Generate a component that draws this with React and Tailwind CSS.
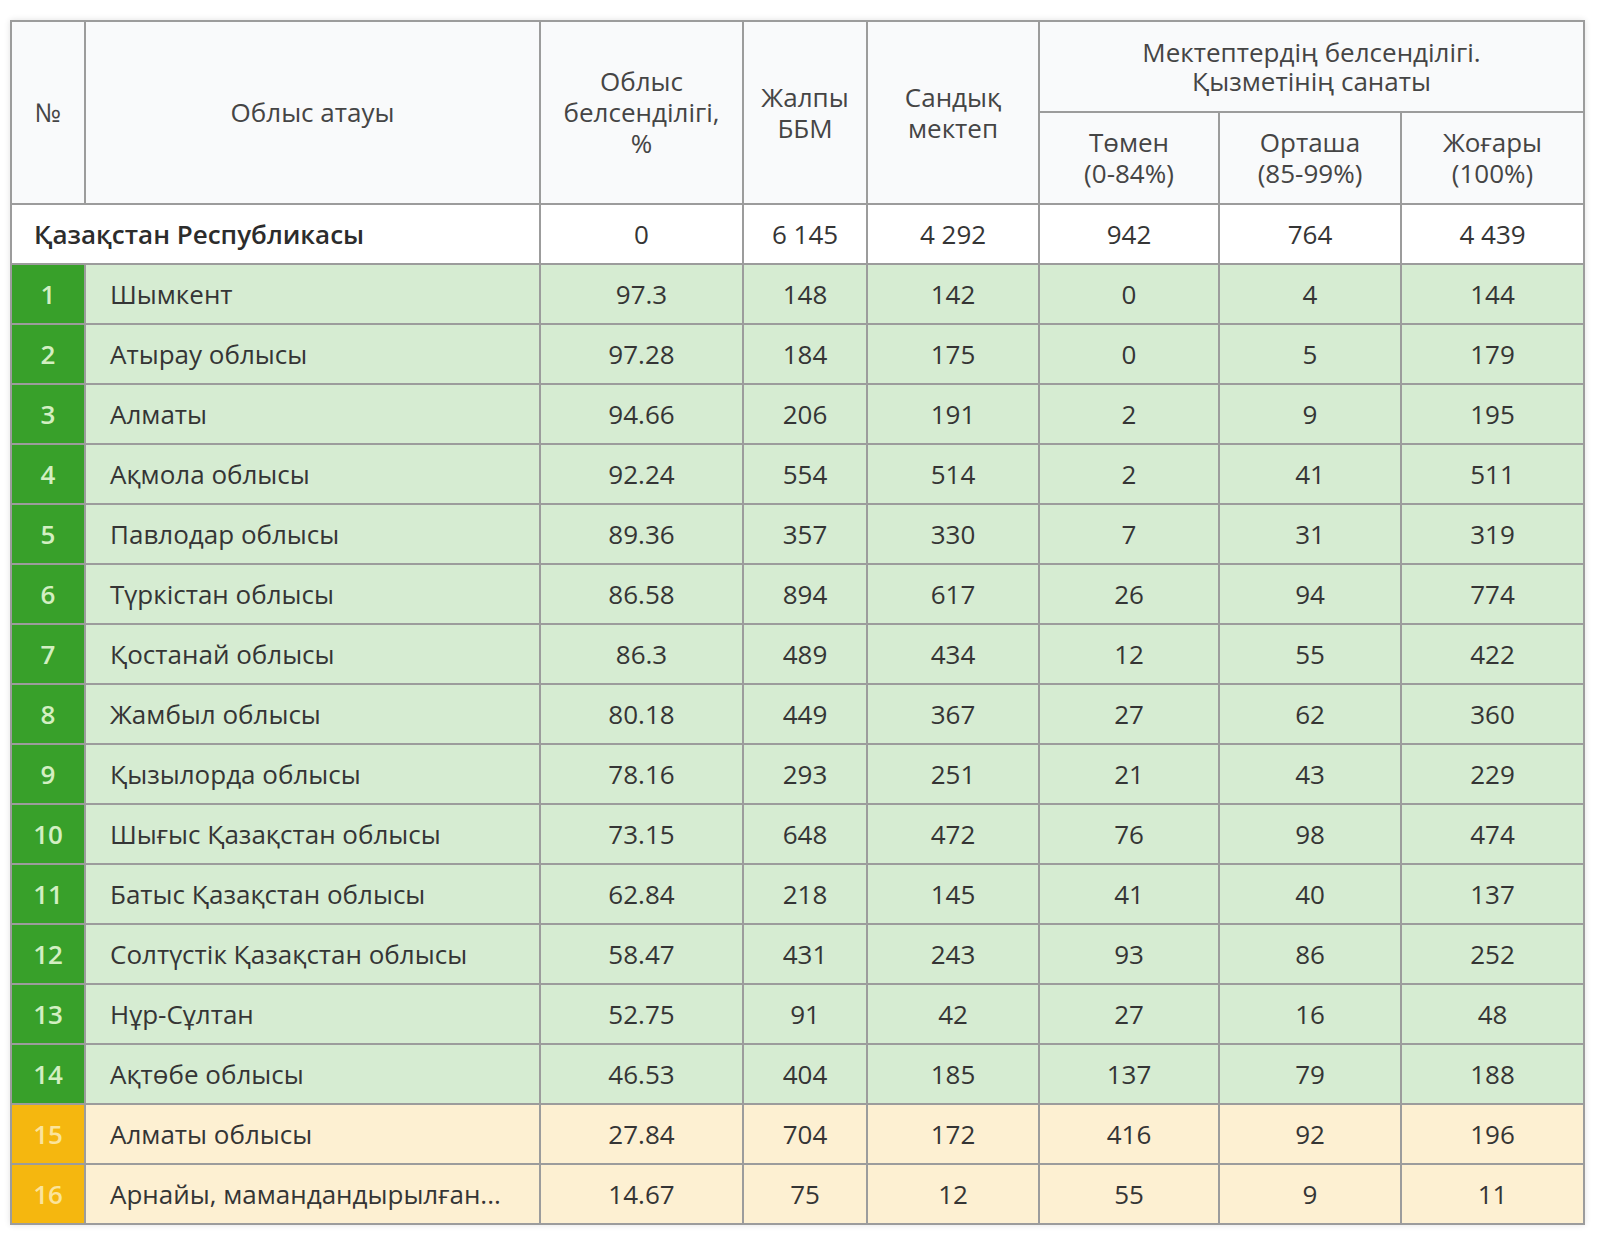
const rows = [
  ["Шымкент", "97.3", "148", "142", "0", "4", "144"],
  ["Атырау облысы", "97.28", "184", "175", "0", "5", "179"],
  ["Алматы", "94.66", "206", "191", "2", "9", "195"],
  ["Ақмола облысы", "92.24", "554", "514", "2", "41", "511"],
  ["Павлодар облысы", "89.36", "357", "330", "7", "31", "319"],
  ["Түркістан облысы", "86.58", "894", "617", "26", "94", "774"],
  ["Қостанай облысы", "86.3", "489", "434", "12", "55", "422"],
  ["Жамбыл облысы", "80.18", "449", "367", "27", "62", "360"],
  ["Қызылорда облысы", "78.16", "293", "251", "21", "43", "229"],
  ["Шығыс Қазақстан облысы", "73.15", "648", "472", "76", "98", "474"],
  ["Батыс Қазақстан облысы", "62.84", "218", "145", "41", "40", "137"],
  ["Солтүстік Қазақстан облысы", "58.47", "431", "243", "93", "86", "252"],
  ["Нұр-Сұлтан", "52.75", "91", "42", "27", "16", "48"],
  ["Ақтөбе облысы", "46.53", "404", "185", "137", "79", "188"],
  ["Алматы облысы", "27.84", "704", "172", "416", "92", "196"],
  ["Арнайы, мамандандырылған...", "14.67", "75", "12", "55", "9", "11"],
];

export default function App() {
  return (
    <div className="w-[1600px] h-[1236px] bg-white pt-[20px] pl-[10px] font-['Open_Sans',sans-serif] text-[#353535]">
      <table className="table-fixed border-collapse w-[1573px] shadow-[0_0_6px_rgba(0,0,0,0.12)]">
        <colgroup>
          <col className="w-[74px]" />
          <col className="w-[455px]" />
          <col className="w-[203px]" />
          <col className="w-[124px]" />
          <col className="w-[172px]" />
          <col className="w-[180px]" />
          <col className="w-[182px]" />
          <col className="w-[183px]" />
        </colgroup>
        <thead className="bg-[#f9fafb] text-[26px] leading-[31px] text-[#454545]">
          <tr className="h-[91px]">
            <th rowSpan={2} className="border-2 border-[#9c9c9c] font-normal">№</th>
            <th rowSpan={2} className="border-2 border-[#9c9c9c] font-normal">Облыс атауы</th>
            <th rowSpan={2} className="border-2 border-[#9c9c9c] font-normal">
              Облыс
              <br />
              белсенділігі,
              <br />%
            </th>
            <th rowSpan={2} className="border-2 border-[#9c9c9c] font-normal">
              Жалпы
              <br />
              ББМ
            </th>
            <th rowSpan={2} className="border-2 border-[#9c9c9c] font-normal">
              Сандық
              <br />
              мектеп
            </th>
            <th colSpan={3} className="border-2 border-[#9c9c9c] font-normal leading-[29px]">
              Мектептердің белсенділігі.
              <br />
              Қызметінің санаты
            </th>
          </tr>
          <tr className="h-[92px]">
            <th className="border-2 border-[#9c9c9c] font-normal">
              Төмен
              <br />
              (0-84%)
            </th>
            <th className="border-2 border-[#9c9c9c] font-normal">
              Орташа
              <br />
              (85-99%)
            </th>
            <th className="border-2 border-[#9c9c9c] font-normal">
              Жоғары
              <br />
              (100%)
            </th>
          </tr>
        </thead>
        <tbody className="text-[26px] font-medium">
          <tr className="h-[60px] bg-white">
            <td colSpan={2} className="border-2 border-[#9c9c9c] pl-[22px] font-semibold text-[#2c2c2c]">
              Қазақстан Республикасы
            </td>
            <td className="border-2 border-[#9c9c9c] text-center">0</td>
            <td className="border-2 border-[#9c9c9c] text-center">6 145</td>
            <td className="border-2 border-[#9c9c9c] text-center">4 292</td>
            <td className="border-2 border-[#9c9c9c] text-center">942</td>
            <td className="border-2 border-[#9c9c9c] text-center">764</td>
            <td className="border-2 border-[#9c9c9c] text-center">4 439</td>
          </tr>
          {rows.map((r, i) => {
            const warn = i >= 14;
            return (
              <tr key={i} className={`h-[60px] ${warn ? "bg-[#fdf0d2]" : "bg-[#d6ecd2]"}`}>
                <td
                  className={`border-2 border-[#9c9c9c] text-center font-semibold ${
                    warn ? "bg-[#f5b70f] text-[#fbe49c]" : "bg-[#38a02a] text-[#d3efc2]"
                  }`}
                >
                  {i + 1}
                </td>
                <td className="border-2 border-[#9c9c9c] pl-6 whitespace-nowrap">{r[0]}</td>
                {r.slice(1).map((v, j) => (
                  <td key={j} className="border-2 border-[#9c9c9c] text-center">
                    {v}
                  </td>
                ))}
              </tr>
            );
          })}
        </tbody>
      </table>
    </div>
  );
}
